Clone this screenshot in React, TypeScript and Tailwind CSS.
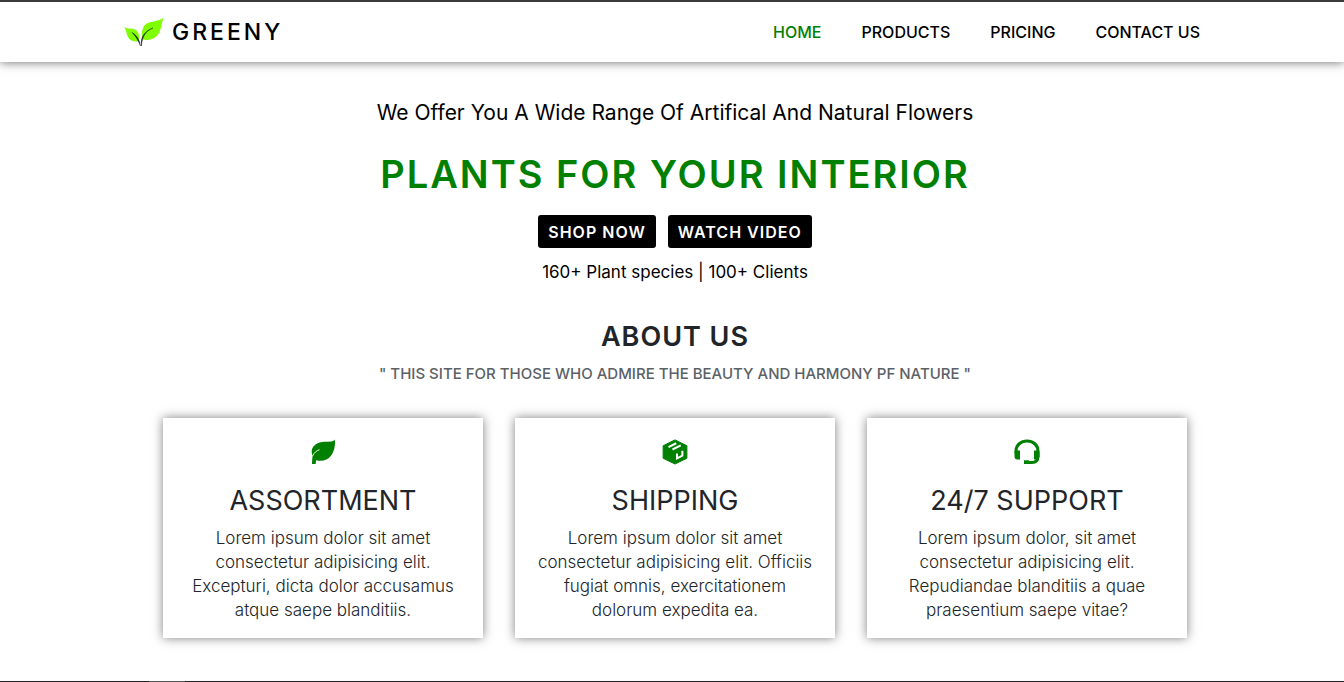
import type { ReactNode } from "react";

const links = ["HOME", "PRODUCTS", "PRICING", "CONTACT US"];

function LeafIcon() {
  return (
    <svg viewBox="0 0 30 30" className="size-[30px]" aria-hidden="true">
      <path d="M27 2.500C25 5.500 20 4.200 14 5C7.500 6 3.700 10 3.700 14.500C3.700 16.300 4 17.800 4.600 19.200C4.200 21.500 4 24 4 27H7.700C7.700 25.500 7.900 24.200 8.200 23.200C18 26 28 19.500 27 2.500Z" fill="currentColor" />
      <path d="M4.600 19C6 15.800 8.200 13.800 11.500 12.700" stroke="#fff" strokeWidth="0.900" fill="none" />
    </svg>
  );
}

function PackageIcon() {
  return (
    <svg viewBox="0 0 24 24" className="size-[30px]" aria-hidden="true">
      <path d="M12 2.300L21.500 7V17L12 21.600L2.500 17V7Z" fill="currentColor" stroke="currentColor" strokeWidth="0.800" strokeLinejoin="round" />
      <path d="M6.800 8.100L13 5M10 10L16.600 6.700" stroke="#fff" strokeWidth="1.600" fill="none" />
      <path d="M13.600 13.200V17.100L17.900 14.900V11" stroke="#fff" strokeWidth="1.600" fill="none" />
    </svg>
  );
}

function HeadsetIcon() {
  return (
    <svg viewBox="0 0 30 30" className="size-[30px]" aria-hidden="true">
      <path d="M4 16V14C4 8 9 4 15 4S26 8 26 14V19C26 23.500 24 25.500 20 25.500H12.500" stroke="currentColor" strokeWidth="3" fill="none" />
      <path d="M3.500 13.500H8V22.500H5.500Q2.500 22.500 2.500 19.500V14.500ZM22 13.500H26.500L27.500 14.500V20Q27 22.500 24.500 22.500H22Z" fill="currentColor" />
      <path d="M12 23.300H17V27H12Z" fill="currentColor" />
    </svg>
  );
}

const features: { icon: ReactNode; title: string; lines: string[] }[] = [
  {
    icon: <LeafIcon />,
    title: "ASSORTMENT",
    lines: ["Lorem ipsum dolor sit amet", "consectetur adipisicing elit.", "Excepturi, dicta dolor accusamus", "atque saepe blanditiis."],
  },
  {
    icon: <PackageIcon />,
    title: "SHIPPING",
    lines: ["Lorem ipsum dolor sit amet", "consectetur adipisicing elit. Officiis", "fugiat omnis, exercitationem", "dolorum expedita ea."],
  },
  {
    icon: <HeadsetIcon />,
    title: "24/7 SUPPORT",
    lines: ["Lorem ipsum dolor, sit amet", "consectetur adipisicing elit.", "Repudiandae blanditiis a quae", "praesentium saepe vitae?"],
  },
];

function Logo() {
  return (
    <svg viewBox="0 0 40 30" className="h-[30px] w-10" aria-hidden="true">
      <path d="M0 10C4 12.500 9 10.500 12.500 13.500C15.500 17 15.500 20 15 24.500C10 25 6 24 4 20C2 16 2.500 13 0 10Z" fill="#80ff00" />
      <path d="M40 0.500C34 5.500 25 3 20 9C17.500 13 17.500 18 18.500 22.500C25 24 32 22 35 16C38 10 37 6 40 0.500Z" fill="#80ff00" />
      <path d="M8 15.500C12 18 15 21 16.500 29C14 23 12 19.500 8 15.500ZM29 11C23 13 18 18.500 17.500 29C16 20 21 14 29 11Z" fill="#111" stroke="#111" strokeWidth="0.400" />
    </svg>
  );
}

export default function App() {
  return (
    <div className="bg-white font-['Inter','Open_Sans',sans-serif] text-black">
      <header className="relative border-t-2 border-[#3b3a3b] bg-white shadow-[0_0_10px_rgba(0,0,0,0.6)]">
        <div className="mx-auto flex h-[60px] max-w-[1104px] items-center justify-between pr-6 pl-1">
          <a href="#" className="flex items-center gap-2 text-[23px] font-medium tracking-[3px]">
            <Logo />
            GREENY
          </a>
          <nav className="flex gap-10 text-base font-medium">
            {links.map((l, i) => (
              <a key={l} href="#" className={i === 0 ? "text-[#008000]" : ""}>{l}</a>
            ))}
          </nav>
        </div>
      </header>
      <main className="pb-[43px] pl-1.5 text-center">
        <section className="flex flex-col items-center pt-9">
          <p className="text-[21px] leading-[30px]">We Offer You A Wide Range Of Artifical And Natural Flowers</p>
          <h1 className="mt-5 text-[38px] leading-[52px] font-semibold tracking-[2px] text-[#008000]">PLANTS FOR YOUR INTERIOR</h1>
          <div className="mt-[15px] flex gap-3">
            <button className="h-[33px] rounded-[3px] bg-black px-2.5 font-semibold tracking-[1px] text-white">SHOP NOW</button>
            <button className="h-[33px] rounded-[3px] bg-black px-2.5 font-semibold tracking-[1px] text-white">WATCH VIDEO</button>
          </div>
          <p className="mt-3 text-[17px] leading-6">160+ Plant species | 100+ Clients</p>
        </section>
        <section className="pt-9">
          <h2 className="text-[27px] leading-[34px] font-semibold tracking-[1px] text-[#212529]">ABOUT US</h2>
          <p className="mt-2 text-[15px] leading-6 font-medium text-[#5c6166]">" THIS SITE FOR THOSE WHO ADMIRE THE BEAUTY AND HARMONY PF NATURE "</p>
          <div className="mx-auto mt-8 grid max-w-[1024px] grid-cols-3 gap-8">
            {features.map((f) => (
              <article key={f.title} className="bg-white pt-[19px] pb-4 text-[#212529] shadow-[0_0_10px_rgba(0,0,0,0.5)]">
                <div className="flex justify-center text-[#008000]">{f.icon}</div>
                <h3 className="mt-[17px] text-[27px] leading-[34px]">{f.title}</h3>
                <p className="mt-2 text-[17px] leading-6 font-light">
                  {f.lines.map((line) => (
                    <span key={line} className="block">{line}</span>
                  ))}
                </p>
              </article>
            ))}
          </div>
        </section>
      </main>
      <footer className="flex h-px bg-[#242124]">
        <span className="ml-[149px] w-9 bg-[#555]" />
      </footer>
    </div>
  );
}
